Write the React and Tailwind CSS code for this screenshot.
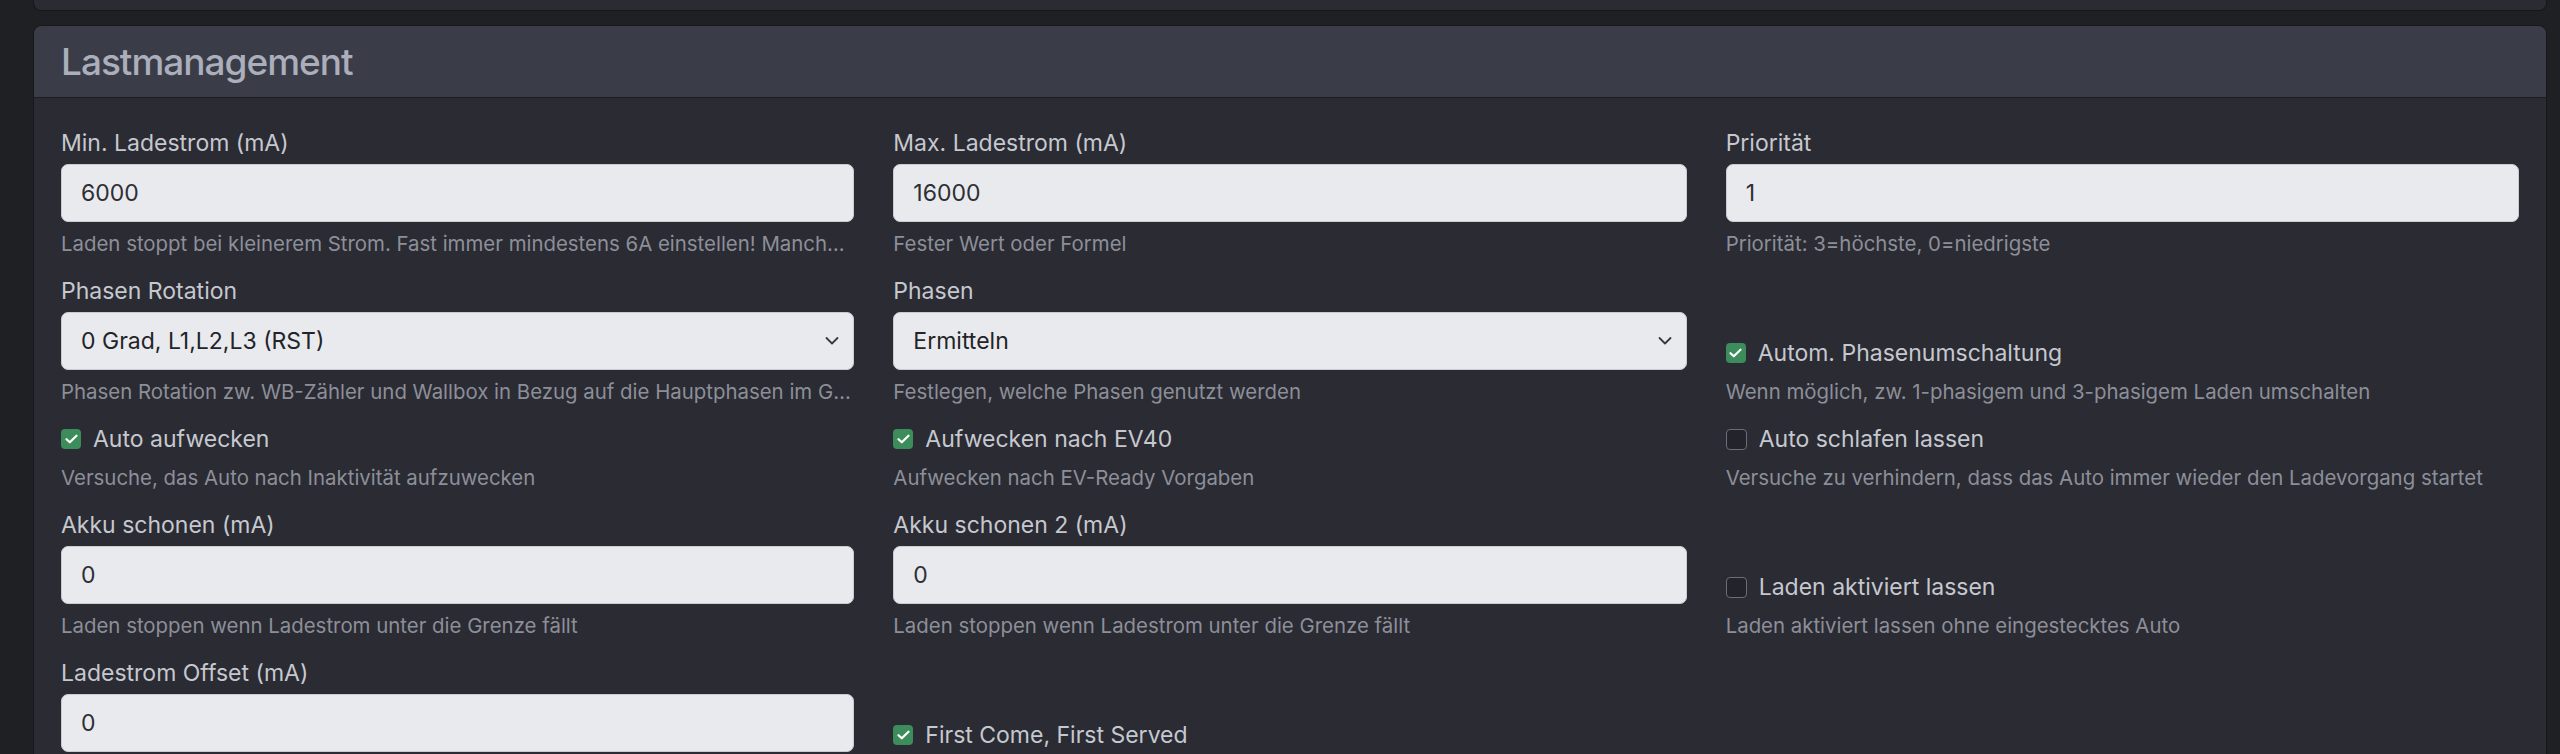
import { useState } from "react";

const font = { fontFamily: "Inter, 'Noto Sans', sans-serif" };

function Chevron() {
    return (
        <svg width="14" height="9" viewBox="0 0 14 9" className="pointer-events-none absolute right-[15px] top-1/2 -translate-y-1/2">
            <path d="M1.5 1.5 7 7l5.5-5.5" fill="none" stroke="#343a40" strokeWidth="1.8" strokeLinecap="round" strokeLinejoin="round" />
        </svg>
    );
}

function Help({ children }) {
    return <div className="mt-[7px] truncate text-[20.4px] leading-[30px] text-[#8d8f98]">{children}</div>;
}

// Eingabefeld mit Label und Hilfetext
function Field({ label, value, help }) {
    return (
        <div>
            <label className="mb-[3px] block text-[23px] leading-[36px] text-[#c6c8cf]">{label}</label>
            <input
                type="text"
                defaultValue={value}
                readOnly
                className="block h-[58px] w-full rounded-[7px] border border-[#c9cbd1] bg-[#e9eaee] px-[19px] text-[23px] text-[#2d2f33] outline-none"
            />
            <Help>{help}</Help>
        </div>
    );
}

function SelectField({ label, value, help }) {
    return (
        <div>
            <label className="mb-[3px] block text-[23px] leading-[36px] text-[#c6c8cf]">{label}</label>
            <div className="relative">
                <select
                    defaultValue={value}
                    className="block h-[58px] w-full appearance-none rounded-[7px] border border-[#c9cbd1] bg-[#e9eaee] px-[19px] text-[23px] text-[#222428] outline-none"
                >
                    <option>{value}</option>
                </select>
                <Chevron />
            </div>
            <Help>{help}</Help>
        </div>
    );
}

function Check({ label, help, checked }) {
    const [on, setOn] = useState(checked);
    return (
        <div>
            <div className="flex items-center gap-[12px] leading-[36px]" onClick={() => setOn(!on)}>
                {on ? (
                    <span className="flex h-[20px] w-[20px] items-center justify-center rounded-[4px] bg-[#3d8c5c]">
                        <svg width="13" height="10" viewBox="0 0 13 10">
                            <path d="M1.5 5.2 4.8 8.3 11.5 1.7" fill="none" stroke="#fff" strokeWidth="2.2" strokeLinecap="round" strokeLinejoin="round" />
                        </svg>
                    </span>
                ) : (
                    <span className="h-[21px] w-[21px] rounded-[4px] border-[1.5px] border-[#6c6e77] bg-[#23242b]" />
                )}
                <span className="text-[23px] text-[#c6c8cf]">{label}</span>
            </div>
            <div className="mt-[6px] truncate text-[20.4px] leading-[30px] text-[#8d8f98]">{help}</div>
        </div>
    );
}

function Row({ children }) {
    return <div className="mb-[14px] grid grid-cols-3 items-end gap-x-[39px]">{children}</div>;
}

export default function App() {
    return (
        <div className="h-[754px] overflow-hidden bg-[#1f2024] pl-[33px] pr-[13px]" style={font}>
            {/* vorherige Karte, nur unteres Ende sichtbar */}
            <div className="h-[11px] rounded-b-[8px] border border-t-0 border-[#16171a] bg-[#2a2b33]" />

            <div className="mt-[14px] rounded-[8px] border border-[#17181b] bg-[#2a2b33]">
                <div className="flex h-[72px] items-center rounded-t-[8px] border-b border-[#1d1e22] bg-[#3a3c48] px-[27px]">
                    <h3 className="text-[37px] font-medium leading-none tracking-[-1px] text-[#abaebb]">Lastmanagement</h3>
                </div>

                <div className="px-[27px] pt-[27px]">
                    <Row>
                        <Field label="Min. Ladestrom (mA)" value="6000" help="Laden stoppt bei kleinerem Strom. Fast immer mindestens 6A einstellen! Manch…" />
                        <Field label="Max. Ladestrom (mA)" value="16000" help="Fester Wert oder Formel" />
                        <Field label="Priorität" value="1" help="Priorität: 3=höchste, 0=niedrigste" />
                    </Row>
                    <Row>
                        <SelectField label="Phasen Rotation" value="0 Grad, L1,L2,L3 (RST)" help="Phasen Rotation zw. WB-Zähler und Wallbox in Bezug auf die Hauptphasen im G…" />
                        <SelectField label="Phasen" value="Ermitteln" help="Festlegen, welche Phasen genutzt werden" />
                        <Check label="Autom. Phasenumschaltung" help="Wenn möglich, zw. 1-phasigem und 3-phasigem Laden umschalten" checked />
                    </Row>
                    <Row>
                        <Check label="Auto aufwecken" help="Versuche, das Auto nach Inaktivität aufzuwecken" checked />
                        <Check label="Aufwecken nach EV40" help="Aufwecken nach EV-Ready Vorgaben" checked />
                        <Check label="Auto schlafen lassen" help="Versuche zu verhindern, dass das Auto immer wieder den Ladevorgang startet" checked={false} />
                    </Row>
                    <Row>
                        <Field label="Akku schonen (mA)" value="0" help="Laden stoppen wenn Ladestrom unter die Grenze fällt" />
                        <Field label="Akku schonen 2 (mA)" value="0" help="Laden stoppen wenn Ladestrom unter die Grenze fällt" />
                        <Check label="Laden aktiviert lassen" help="Laden aktiviert lassen ohne eingestecktes Auto" checked={false} />
                    </Row>
                    <Row>
                        <Field label="Ladestrom Offset (mA)" value="0" help="Korrektur des Ladestroms" />
                        <Check label="First Come, First Served" help="Zuerst eingestecktes Auto lädt zuerst" checked />
                        <div />
                    </Row>
                </div>
            </div>
        </div>
    );
}
